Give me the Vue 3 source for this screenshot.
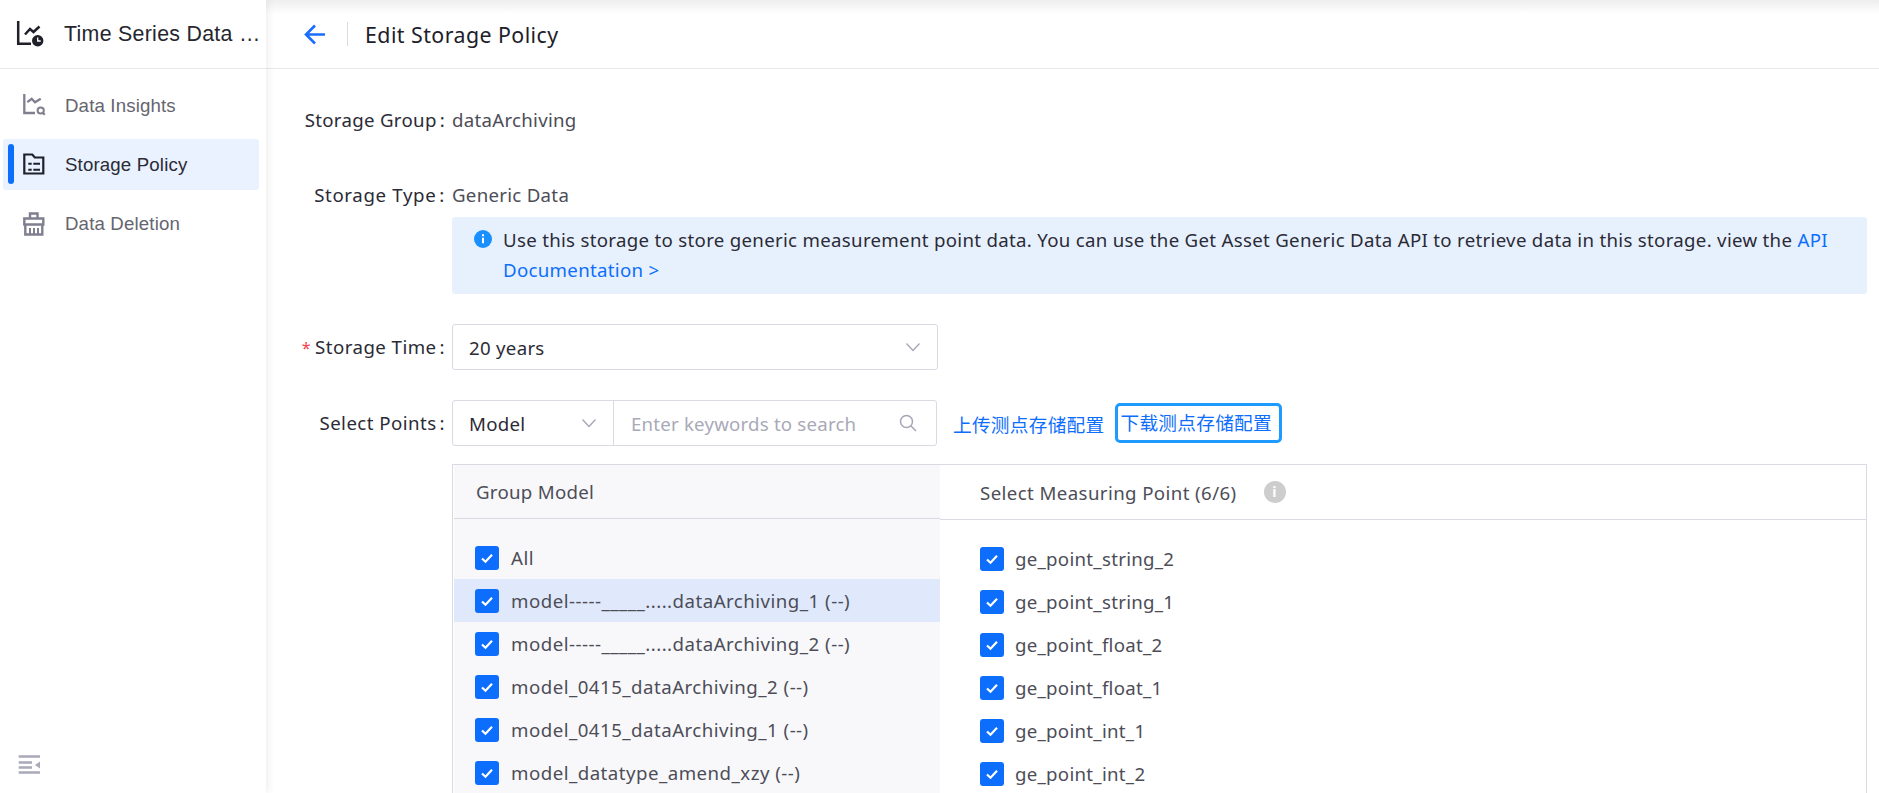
<script setup>
const nav = [
  { label: 'Data Insights', icon: 'insights' },
  { label: 'Storage Policy', icon: 'policy', active: true },
  { label: 'Data Deletion', icon: 'delete' }
]
const models = [
  { name: 'All', plain: true },
  { name: 'model-----_____.....dataArchiving_1', suffix: ' (--)', selected: true },
  { name: 'model-----_____.....dataArchiving_2', suffix: ' (--)' },
  { name: 'model_0415_dataArchiving_2', suffix: ' (--)' },
  { name: 'model_0415_dataArchiving_1', suffix: ' (--)' },
  { name: 'model_datatype_amend_xzy', suffix: ' (--)' }
]
const points = ['ge_point_string_2', 'ge_point_string_1', 'ge_point_float_2', 'ge_point_float_1', 'ge_point_int_1', 'ge_point_int_2']
</script>

<template>
  <div class="app">
    <aside class="sidebar">
      <div class="brand">
        <svg class="brand-icon" viewBox="0 0 28 28" width="28" height="28">
          <path d="M2.200 1v22.800H15" fill="none" stroke="#1f2029" stroke-width="2.500" />
          <path d="M9 14.500L14 9l3.500 3 6-5.500" fill="none" stroke="#1f2029" stroke-width="2.500" />
          <circle cx="21.700" cy="20.700" r="5.700" fill="#1f2029" />
          <path d="M21.700 17.500v3.500h3" fill="none" stroke="#fff" stroke-width="1.300" />
        </svg>
        <span class="brand-text">Time Series Data …</span>
      </div>
      <nav class="nav">
        <div v-for="item in nav" :key="item.label" class="nav-item" :class="{ active: item.active }">
          <span v-if="item.active" class="nav-mark"></span>
          <svg v-if="item.icon === 'insights'" class="nav-icon" viewBox="0 0 24 24" width="24" height="24">
            <path d="M2.300 0v19H13" fill="none" stroke="#7f7f90" stroke-width="2.300" />
            <path d="M5.300 8.200l4.400-3.400L13 8.200l5.700-3.400" fill="none" stroke="#7f7f90" stroke-width="2.300" />
            <circle cx="18.700" cy="16.500" r="3.100" fill="none" stroke="#7f7f90" stroke-width="2" />
            <path d="M20.800 18.800l2 2" stroke="#7f7f90" stroke-width="2.200" />
          </svg>
          <svg v-else-if="item.icon === 'policy'" class="nav-icon" viewBox="0 0 24 24" width="24" height="24">
            <path d="M2.300 1.500h8l2.500 3h8.500v16H2.300z" fill="none" stroke="#1f2029" stroke-width="2.200" />
            <path d="M6.300 10.800h3.400M11.300 10.800H18M6.300 16.800h3.400M11.300 16.800H18" stroke="#1f2029" stroke-width="2" />
          </svg>
          <svg v-else class="nav-icon" viewBox="0 0 24 24" width="24" height="24">
            <path d="M8 6.500V1.500h7.500v5M2.300 6.500h19v6h-19zM3.300 12.500v10h17v-10" fill="none" stroke="#7f7f90" stroke-width="2.400" />
            <path d="M8 16v7M12 16v7M16 16v7" stroke="#7f7f90" stroke-width="2" />
          </svg>
          <span>{{ item.label }}</span>
        </div>
      </nav>
      <svg class="collapse" viewBox="0 0 24 20" width="24" height="20">
        <path d="M0.700 1.500H22M0.700 7.500H14M0.700 12.500H14M0.700 17.500H22" stroke="#a9a9ba" stroke-width="2.400" />
        <path d="M22 6.500v7L17 10z" fill="#a9a9ba" />
      </svg>
    </aside>

    <main class="main">
      <header class="page-head">
        <svg class="back" viewBox="0 0 24 24" width="24" height="24">
          <path d="M21 12.500H3M11 3.500l-9 9 9 9" fill="none" stroke="#1a6dff" stroke-width="2.600" />
        </svg>
        <span class="head-divider"></span>
        <h1>Edit Storage Policy</h1>
      </header>

      <div class="form">
        <div class="row row-group">
          <label>Storage Group<i>:</i></label>
          <span class="value">dataArchiving</span>
        </div>
        <div class="row row-type">
          <label>Storage Type<i>:</i></label>
          <div class="control">
            <span class="value">Generic Data</span>
            <div class="alert">
              <svg class="alert-icon" viewBox="0 0 20 20" width="20" height="20">
                <circle cx="10" cy="10" r="9" fill="#1a90ff" />
                <path d="M10 8.800v5.500M10 5.300v2" stroke="#fff" stroke-width="2" />
              </svg>
              <p>Use this storage to store generic measurement point data. You can use the Get Asset Generic Data API to retrieve data in this storage. view the <a>API</a> <a>Documentation &gt;</a></p>
            </div>
          </div>
        </div>
        <div class="row row-time">
          <label><b>*</b>Storage Time<i>:</i></label>
          <div class="select">
            <span>20 years</span>
            <svg viewBox="0 0 16 10" width="16" height="10"><path d="M1.500 1.500L8 8.500l6.500-7" fill="none" stroke="#a5a5b5" stroke-width="1.300" /></svg>
          </div>
        </div>
        <div class="row row-points">
          <label>Select Points<i>:</i></label>
          <div class="control">
            <div class="search-row">
              <div class="search">
                <div class="search-type">
                  <span>Model</span>
                  <svg viewBox="0 0 16 10" width="16" height="10"><path d="M1.500 1.500L8 8.500l6.500-7" fill="none" stroke="#a5a5b5" stroke-width="1.300" /></svg>
                </div>
                <div class="search-input">
                  <span>Enter keywords to search</span>
                  <svg viewBox="0 0 20 20" width="20" height="20"><circle cx="8.500" cy="8.500" r="6" fill="none" stroke="#a5a5b5" stroke-width="1.500" /><path d="M13 13l5 5" stroke="#a5a5b5" stroke-width="1.500" /></svg>
                </div>
              </div>
              <a class="link">上传测点存储配置</a>
              <a class="link focused">下载测点存储配置</a>
            </div>
            <div class="transfer">
              <div class="col-left">
                <div class="col-head left-head">Group Model</div>
                <ul class="list left-list">
                  <li v-for="m in models" :key="m.name" :class="{ selected: m.selected }">
                    <span class="check"><svg viewBox="0 0 14 14" width="14" height="14"><path d="M2 7.500l3.500 3.300L12 3.800" fill="none" stroke="#fff" stroke-width="2.200" /></svg></span>
                    <span class="text">{{ m.name }}<em>{{ m.suffix }}</em></span>
                  </li>
                </ul>
              </div>
              <div class="col-right">
                <div class="col-head right-head">
                  <span>Select Measuring Point (6/6)</span>
                  <span class="info">i</span>
                </div>
                <ul class="list right-list">
                  <li v-for="p in points" :key="p">
                    <span class="check"><svg viewBox="0 0 14 14" width="14" height="14"><path d="M2 7.500l3.500 3.300L12 3.800" fill="none" stroke="#fff" stroke-width="2.200" /></svg></span>
                    <span class="text">{{ p }}</span>
                  </li>
                </ul>
              </div>
            </div>
          </div>
        </div>
      </div>
    </main>
    <div class="top-shade"></div>
  </div>
</template>

<style>
html, body { margin: 0; overflow: hidden; background: #fff; }
</style>

<style scoped>
.app {
  position: relative;
  display: flex;
  width: 1879px;
  height: 793px;
  overflow: hidden;
  font-family: "Noto Sans", "Noto Sans CJK SC", sans-serif;
  font-size: 18.67px;
  letter-spacing: 0.28px;
  color: #2b2b36;
  background: #fff;
}
.top-shade {
  position: absolute;
  inset: 0 0 auto 0;
  height: 14px;
  background: linear-gradient(#eeeeee, rgba(255, 255, 255, 0));
  pointer-events: none;
}
.sidebar {
  position: relative;
  flex: 0 0 266px;
  display: flex;
  flex-direction: column;
  font-family: "Liberation Sans", Arial, sans-serif;
  letter-spacing: 0.15px;
  box-shadow: 2px 0 8px rgba(0, 0, 0, 0.07);
  z-index: 1;
  background: #fff;
}
.brand {
  flex: none;
  height: 69px;
  box-sizing: border-box;
  border-bottom: 1px solid #e9e9ec;
  display: flex;
  align-items: center;
  padding: 0 0 0 16px;
  gap: 20px;
}
.brand-text { font-size: 21.33px; color: #26262e; white-space: nowrap; letter-spacing: 0.3px; }
.nav { padding: 11px 7px 0 3px; display: flex; flex-direction: column; gap: 8px; }
.nav-item {
  position: relative;
  height: 51px;
  display: flex;
  align-items: center;
  gap: 19px;
  padding-left: 19px;
  border-radius: 3px;
  color: #65656f;
}
.nav-item.active { background: #e9f2fe; color: #2b2b36; }
.nav-mark {
  position: absolute;
  left: 5px;
  top: 5px;
  width: 6px;
  height: 40px;
  border-radius: 3px;
  background: #0d6efd;
}
.collapse { position: absolute; left: 18px; top: 755px; }
.main { flex: 1; min-width: 0; display: flex; flex-direction: column; }
.page-head {
  flex: none;
  height: 69px;
  box-sizing: border-box;
  border-bottom: 1px solid #e9e9ec;
  display: flex;
  align-items: center;
  padding: 0 0 0 38px;
}
.head-divider { width: 1px; height: 24px; background: #dcdce0; margin: 0 17px 0 19px; }
h1 { margin: 0; font-size: 21.33px; font-weight: 400; letter-spacing: 0.45px; color: #20202a; }
.form { padding: 0 12px 0 0; }
.row { display: flex; align-items: flex-start; }
.row label {
  flex: 0 0 186px;
  box-sizing: border-box;
  text-align: right;
  white-space: nowrap;
  color: #2b2b36;
  padding-right: 7px;
  letter-spacing: 0.45px;
}
.row label i { font-style: normal; margin-left: 3px; }
.row label b { font-weight: 400; font-size: 16px; color: #f5414d; margin-right: 4px; }
.row-group { margin-top: 38px; line-height: 26px; }
.row-group label { letter-spacing: 0.3px; }
.row-type { margin-top: 49px; line-height: 26px; }
.row-type label { letter-spacing: 0.65px; }
.row-time { margin-top: 30px; }
.row-time label { line-height: 46px; }
.row-points { margin-top: 29px; }
.row-points > label { line-height: 46px; }
.value { color: #4d4d58; }
.control { flex: 1; min-width: 0; }
.alert {
  margin-top: 9px;
  height: 77px;
  box-sizing: border-box;
  background: #e7f1fe;
  border-radius: 3px;
  padding: 8px 20px 0 21px;
  display: flex;
  gap: 10px;
  line-height: 30px;
  color: #2b2b36;
  letter-spacing: 0.3px;
}
.alert p { margin: 0; }
.alert a { color: #0d6efd; }
.alert-icon { flex: none; margin-top: 4px; }
.select {
  width: 486px;
  height: 46px;
  box-sizing: border-box;
  border: 1px solid #dadae2;
  border-radius: 3px;
  display: flex;
  align-items: center;
  justify-content: space-between;
  padding: 0 16px 0 16px;
}
.search-row { display: flex; align-items: center; }
.search {
  flex: none;
  width: 485px;
  height: 46px;
  box-sizing: border-box;
  border: 1px solid #dadae2;
  border-radius: 3px;
  display: flex;
}
.search-type {
  flex: 0 0 161px;
  box-sizing: border-box;
  border-right: 1px solid #dadae2;
  display: flex;
  align-items: center;
  justify-content: space-between;
  padding: 0 16px;
}
.search-input {
  flex: 1;
  display: flex;
  align-items: center;
  justify-content: space-between;
  padding: 0 18px 0 17px;
  color: #a9a9b8;
  white-space: nowrap;
  letter-spacing: 0.2px;
}
.link { color: #0d6efd; white-space: nowrap; }
.search + .link { margin-left: 16px; }
.focused {
  padding: 0 7px 0 3px;
  line-height: 34px;
  border: 3px solid #1f9bff;
  border-radius: 5px;
  margin-left: 10px;
}
.transfer {
  margin-top: 18px;
  height: 400px;
  box-sizing: border-box;
  border: 1px solid #dadae2;
  display: flex;
}
.col-left { flex: 0 0 486px; background: #f8f8fb; margin-left: 1px; }
.col-right { flex: 1; }
.col-head {
  height: 54px;
  box-sizing: border-box;
  border-bottom: 1px solid #dadae2;
  display: flex;
  align-items: center;
}
.left-head { padding-left: 22px; color: #4d4d58; }
.right-head { padding-left: 40px; color: #4d4d58; height: 55px; letter-spacing: 0.4px; }
.info {
  width: 22px;
  height: 22px;
  margin-left: 27px;
  border-radius: 50%;
  background: #cdcdcd;
  color: #fff;
  font-size: 14px;
  font-weight: 700;
  line-height: 22px;
  text-align: center;
}
.list { list-style: none; margin: 0; padding: 0; }
.left-list { padding-top: 17px; }
.left-list .text { letter-spacing: 0.48px; }
.right-list { padding-top: 17px; }
.list li { height: 43px; display: flex; align-items: center; }
.left-list li { padding-left: 21px; }
.left-list .check { margin-right: 12px; }
.right-list li { padding-left: 40px; }
.list li.selected { background: #e0e9fb; }
.check {
  flex: none;
  width: 24px;
  height: 24px;
  border-radius: 3px;
  background: #0d6efd;
  display: flex;
  align-items: center;
  justify-content: center;
  margin-right: 11px;
}
.text { color: #4d4d58; white-space: nowrap; }
.text em { font-style: normal; }
</style>
